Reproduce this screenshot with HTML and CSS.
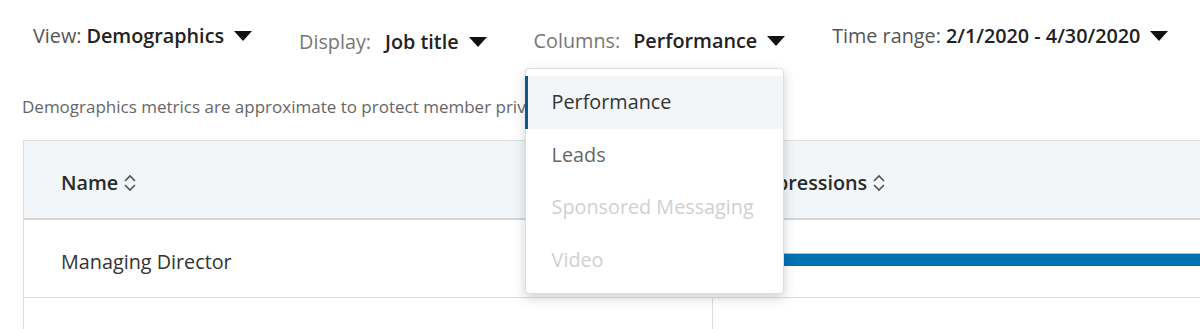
FILE: index.html
```html
<!DOCTYPE html>
<html lang="en">
<head>
    <meta charset="UTF-8">
    <meta name="viewport" content="width=device-width, initial-scale=1.0">
    <title>Demographics</title>
    <link rel="stylesheet" href="styles.css">
</head>
<body>
    <div class="filtros">
        <div class="filtro">
            <span class="rotulo">View:</span>
            <span class="valor">Demographics</span>
            <span class="seta"></span>
        </div>
        <div class="filtro baixo">
            <span class="rotulo">Display:</span>
            <span class="valor">Job title</span>
            <span class="seta"></span>
        </div>
        <div class="filtro baixo colunas">
            <span class="rotulo">Columns:</span>
            <span class="valor">Performance</span>
            <span class="seta"></span>

            <!-- Menu aberto -->
            <ul class="menu">
                <li class="ativo">Performance</li>
                <li>Leads</li>
                <li class="desativado">Sponsored Messaging</li>
                <li class="desativado">Video</li>
            </ul>
        </div>
        <div class="filtro">
            <span class="rotulo">Time range:</span>
            <span class="valor">2/1/2020 - 4/30/2020</span>
            <span class="seta"></span>
        </div>
    </div>

    <p class="aviso">Demographics metrics are approximate to protect member privacy.</p>

    <div class="tabela">
        <div class="linha cabecalho">
            <div class="celula nome">Name
                <svg class="ordem" width="14" height="20" viewBox="0 0 14 20"><path d="M2 8 L7 3 L12 8 M2 12 L7 17 L12 12" fill="none" stroke="#555" stroke-width="1.7"/></svg>
            </div>
            <div class="celula metrica">Impressions
                <svg class="ordem" width="14" height="20" viewBox="0 0 14 20"><path d="M2 8 L7 3 L12 8 M2 12 L7 17 L12 12" fill="none" stroke="#555" stroke-width="1.7"/></svg>
            </div>
        </div>
        <div class="linha">
            <div class="celula nome">Managing Director</div>
            <div class="celula grafico"><div class="barra" style="width: 100%"></div></div>
        </div>
        <div class="linha vazia">
            <div class="celula nome"></div>
            <div class="celula"></div>
        </div>
    </div>
</body>
</html>
```

FILE: styles.css
```css
/* Estilos Gerais */
body {
    font-family: "Open Sans", "Noto Sans", Arial, sans-serif;
    margin: 0;
    padding: 0;
    color: #333;
    background: white;
    overflow: hidden;
    height: 329px;
}

/* Barra de filtros */
.filtros {
    display: flex;
    align-items: flex-start;
    gap: 47px;
    padding: 22px 0 0 33px;
    height: 46px;
}

.filtro {
    position: relative;
    display: flex;
    align-items: center;
    font-size: 19.8px;
    white-space: nowrap;
}

.filtro.baixo {
    margin-top: 6px;
}

.filtro.colunas {
    margin-top: 5px;
}

.rotulo {
    color: #555;
    margin-right: 5px;
}

.baixo .rotulo {
    color: #777;
    margin-right: 14px;
}

.colunas .rotulo {
    margin-right: 13px;
}

.valor {
    font-weight: 600;
    color: #222;
}

.seta {
    width: 0;
    height: 0;
    border-left: 9px solid transparent;
    border-right: 9px solid transparent;
    border-top: 10px solid #111;
    margin-left: 10px;
    margin-top: 1px;
}

/* Menu do filtro de colunas */
.menu {
    position: absolute;
    top: 41px;
    left: -9px;
    z-index: 2;
    width: 259px;
    margin: 0;
    padding: 7px 0;
    list-style: none;
    background: white;
    border: 1px solid #ddd;
    border-radius: 4px;
    box-shadow: 0 4px 12px rgba(0, 0, 0, 0.18);
    box-sizing: border-box;
}

.menu li {
    height: 52.5px;
    line-height: 52px;
    padding-left: 26px;
    color: #666;
    font-size: 19.8px;
}

.menu li.ativo {
    background-color: #f3f6f8;
    border-left: 3px solid #0a5a8a;
    padding-left: 24px;
    margin-left: -1px;
    color: #333;
}

.menu li.desativado {
    color: #d0d0d0;
}

/* Aviso */
.aviso {
    margin: 0;
    padding: 27px 0 0 22px;
    height: 45px;
    font-size: 17px;
    color: #666;
    white-space: nowrap;
}

/* Tabela */
.tabela {
    margin-left: 23px;
    border-left: 1px solid #ddd;
    border-top: 1px solid #ddd;
}

.linha {
    display: grid;
    grid-template-columns: 688px 1fr;
    height: 77px;
    border-bottom: 1px solid #ddd;
}

.linha.cabecalho {
    background-color: #f3f6f8;
    border-bottom: 2px solid #d4d4d4;
    font-weight: 600;
    color: #2a2a2a;
}

.linha.vazia {
    height: 31px;
    border-bottom: none;
}

.celula {
    display: flex;
    align-items: center;
    padding: 6px 0 0 37px;
    font-size: 19.8px;
    white-space: nowrap;
}

.celula.metrica {
    padding-left: 39px;
}

.celula.grafico {
    padding-top: 0;
}

.linha.vazia .celula + .celula {
    border-left: 1px solid #ddd;
}

.ordem {
    margin-left: 5px;
}

.barra {
    height: 12px;
    background-color: #0073b1;
    border-top: 1px solid #7fd0ee;
    margin-top: 2px;
}
```
